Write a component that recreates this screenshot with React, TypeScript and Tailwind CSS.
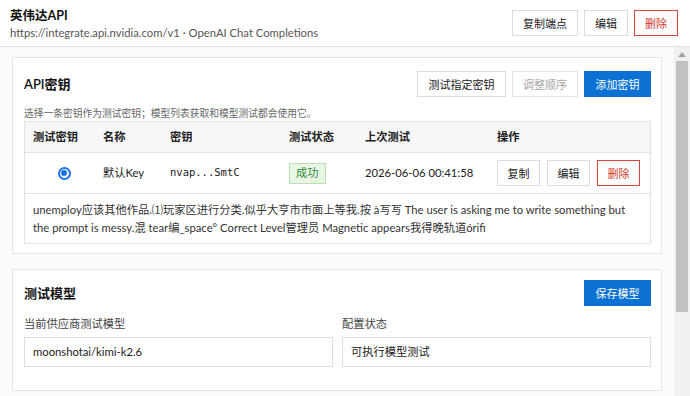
import React from 'react';

const font = { fontFamily: 'Lato, "Noto Sans CJK SC", sans-serif' };

function Btn({ children, variant = 'default', className = '' }: { children: React.ReactNode; variant?: 'default' | 'danger' | 'primary' | 'disabled'; className?: string }) {
  const styles = {
    default: 'bg-white border-[#dcdcdc] text-[#222]',
    danger: 'bg-white border-[#d4463c] text-[#d0392d]',
    primary: 'bg-[#0b72d3] border-[#0b72d3] text-white',
    disabled: 'bg-white border-[#e2e2e2] text-[#a8a8a8]',
  }[variant];
  return (
    <button className={`h-[26px] shrink-0 border text-[11px] leading-none whitespace-nowrap flex items-center justify-center ${styles} ${className}`}>
      {children}
    </button>
  );
}

const cols = 'grid grid-cols-[70px_67px_119px_76px_132px_1fr]';

export default function App() {
  return (
    <div className="w-[690px] h-[396px] flex flex-col bg-white overflow-hidden text-[#222]" style={font}>
      <header className="h-[47px] shrink-0 border-b border-[#e6e6e6] flex items-center justify-between pl-[10px] pr-[12px]">
        <div className="flex flex-col pt-[1px]">
          <span className="text-[12.5px] font-bold leading-[18px] text-[#111]">英伟达API</span>
          <span className="text-[11.25px] leading-[16px] text-[#555]">https://integrate.api.nvidia.com/v1 · OpenAI Chat Completions</span>
        </div>
        <div className="flex gap-[6px]">
          <Btn className="w-[66px]">复制端点</Btn>
          <Btn className="w-[44px]">编辑</Btn>
          <Btn variant="danger" className="w-[44px]">删除</Btn>
        </div>
      </header>

      <div className="flex-1 flex min-h-0">
        <main className="flex-1 min-w-0 overflow-hidden bg-[#fbfbfb] pl-[12px] pr-[12px] pt-[10px] flex flex-col gap-[15px]">
          {/* API keys card */}
          <section className="bg-white border border-[#e6e6e6] pl-[11px] pr-[10px] pt-[13px] pb-[9px]">
            <div className="flex items-center justify-between h-[26px]">
              <h2 className="text-[13px] font-semibold text-[#111] pt-[2px]">API密钥</h2>
              <div className="flex gap-[6px]">
                <Btn className="w-[89px]">测试指定密钥</Btn>
                <Btn variant="disabled" className="w-[66px]">调整顺序</Btn>
                <Btn variant="primary" className="w-[67px]">添加密钥</Btn>
              </div>
            </div>
            <p className="text-[9.75px] leading-[16px] text-[#666] mt-[8px]">选择一条密钥作为测试密钥；模型列表获取和模型测试都会使用它。</p>
            <div className="border border-[#e2e2e2] text-[11.25px]">
              <div className={`${cols} h-[31px] items-center bg-[#f7f7f7] border-b border-[#e2e2e2] font-bold text-[#222]`}>
                <span className="pl-[8px]">测试密钥</span>
                <span className="pl-[8px]">名称</span>
                <span className="pl-[8px]">密钥</span>
                <span className="pl-[8px]">测试状态</span>
                <span className="pl-[8px]">上次测试</span>
                <span className="pl-[8px]">操作</span>
              </div>
              <div className={`${cols} h-[41px] items-center border-b border-[#e2e2e2]`}>
                <span className="flex justify-center pl-[8px]">
                  <span className="w-[13px] h-[13px] rounded-full border-[2px] border-[#1a73e8] flex items-center justify-center">
                    <span className="w-[6px] h-[6px] rounded-full bg-[#1a73e8]" />
                  </span>
                </span>
                <span className="pl-[8px]">默认Key</span>
                <span className="pl-[8px] text-[10.5px]" style={{ fontFamily: '"DejaVu Sans Mono", monospace' }}>nvap...SmtC</span>
                <span className="pl-[8px]">
                  <span className="inline-flex items-center h-[21px] px-[6px] bg-[#e9f6e6] border border-[#b9dfb1] text-[#2e8a33] text-[11.25px]">成功</span>
                </span>
                <span className="pl-[8px]">2026-06-06 00:41:58</span>
                <span className="pl-[8px] flex gap-[7px]">
                  <Btn className="w-[43px]">复制</Btn>
                  <Btn className="w-[43px]">编辑</Btn>
                  <Btn variant="danger" className="w-[43px]">删除</Btn>
                </span>
              </div>
              <div className="px-[8px] pt-[7px] pb-[6px] leading-[18px] text-[#333] whitespace-nowrap overflow-hidden">
                unemploy应该其他作品.⑴玩家区进行分类.似乎大亨市市面上等我.按 à写写 The user is asking me to write something but
                <br />
                the prompt is messy.混 tear编_space° Correct Level管理员 Magnetic appears我得晚轨道órifi
              </div>
            </div>
          </section>

          {/* Test model card */}
          <section className="bg-white border border-[#e6e6e6] pl-[11px] pr-[10px] pt-[10px] pb-[23px]">
            <div className="flex items-center justify-between h-[26px]">
              <h2 className="text-[13px] font-semibold text-[#111] pt-[2px]">测试模型</h2>
              <Btn variant="primary" className="w-[67px]">保存模型</Btn>
            </div>
            <div className="grid grid-cols-2 gap-[9px] mt-[9px]">
              <div className="flex flex-col gap-[4px]">
                <label className="text-[11.25px] leading-[18px] text-[#444]">当前供应商测试模型</label>
                <div className="h-[30px] border border-[#dedede] flex items-center px-[8px] text-[11.25px] text-[#222]">moonshotai/kimi-k2.6</div>
              </div>
              <div className="flex flex-col gap-[4px]">
                <label className="text-[11.25px] leading-[18px] text-[#444]">配置状态</label>
                <div className="h-[30px] border border-[#dedede] flex items-center px-[8px] text-[11.25px] text-[#222]">可执行模型测试</div>
              </div>
            </div>
          </section>
        </main>

        {/* scrollbar */}
        <div className="w-[16px] shrink-0 bg-[#f1f1f1] flex flex-col items-center">
          <div className="h-[14px] flex items-center justify-center">
            <svg width="8" height="5" viewBox="0 0 8 5"><path d="M4 0L8 5H0z" fill="#a3a3a3" /></svg>
          </div>
          <div className="w-[12px] h-[251px] bg-[#c1c1c1]" />
        </div>
      </div>
    </div>
  );
}
